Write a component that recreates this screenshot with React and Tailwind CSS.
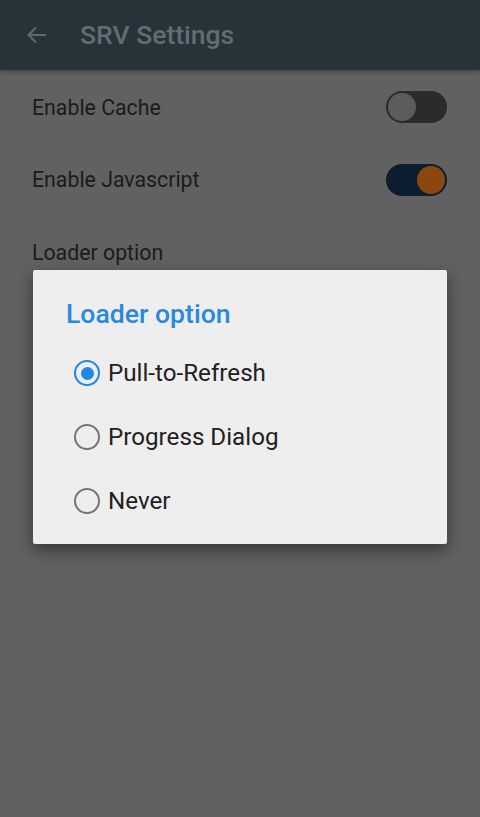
import React from "react";

function Toggle({ on }) {
  return (
    <div
      className={`flex h-[32px] w-[61px] items-center rounded-full px-[2px] ${
        on ? "justify-end bg-[#0c1d30]" : "justify-start bg-[#2b2b2b]"
      }`}
    >
      <div
        className={`h-[28px] w-[28px] rounded-full ${
          on ? "bg-[#8a4710]" : "bg-[#5c5c5c]"
        }`}
      />
    </div>
  );
}

function Radio({ checked, label }) {
  return (
    <div className="flex h-[64px] items-center">
      <div
        className={`flex h-[26px] w-[26px] items-center justify-center rounded-full border-[2.5px] ${
          checked ? "border-[#1e88e5]" : "border-[#757575]"
        }`}
      >
        {checked && <div className="h-[13px] w-[13px] rounded-full bg-[#1e88e5]" />}
      </div>
      <span className="ml-[8px] text-[24.2px] text-[#212121]">{label}</span>
    </div>
  );
}

export default function App() {
  return (
    <div
      className="relative h-[817px] w-[480px] overflow-hidden bg-[#616161]"
      style={{ fontFamily: "Roboto, 'Noto Sans', sans-serif" }}
    >
      <header className="flex h-[70px] items-center bg-[#283339] shadow-[0_2px_4px_rgba(0,0,0,0.3)]">
        <svg
          className="ml-[25px]"
          width="24"
          height="24"
          viewBox="0 0 24 24"
          fill="none"
          stroke="#5f6a70"
          strokeWidth="2"
        >
          <path d="M21 12H4M11 4.5L3.5 12 11 19.5" />
        </svg>
        <h1 className="ml-[31px] text-[26.5px] font-medium text-[#616d73]">SRV Settings</h1>
      </header>

      <div className="flex flex-col px-[32px]">
        <div className="flex h-[74px] items-center justify-between pt-[2px]">
          <span className="text-[21.3px] text-[#1b1b1b]">Enable Cache</span>
          <div className="mr-[1px] -mt-[2px]">
            <Toggle on={false} />
          </div>
        </div>
        <div className="flex h-[72px] items-center justify-between">
          <span className="text-[21.3px] text-[#1b1b1b]">Enable Javascript</span>
          <div className="mr-[1px]">
            <Toggle on />
          </div>
        </div>
        <div className="flex h-[73px] items-center">
          <span className="text-[21.3px] text-[#1b1b1b]">Loader option</span>
        </div>
      </div>

      <div className="absolute left-[33px] top-[270px] h-[274px] w-[414px] rounded-[2px] bg-[#eeeeee] shadow-[0_6px_16px_rgba(0,0,0,0.45)]">
        <div className="px-[33px] pt-[26px]">
          <h2 className="text-[26.6px] font-medium leading-[36px] text-[#2a88df]">Loader option</h2>
        </div>
        <div className="mt-[9px] flex flex-col px-[41px]">
          <Radio checked label="Pull-to-Refresh" />
          <Radio label="Progress Dialog" />
          <Radio label="Never" />
        </div>
      </div>
    </div>
  );
}
